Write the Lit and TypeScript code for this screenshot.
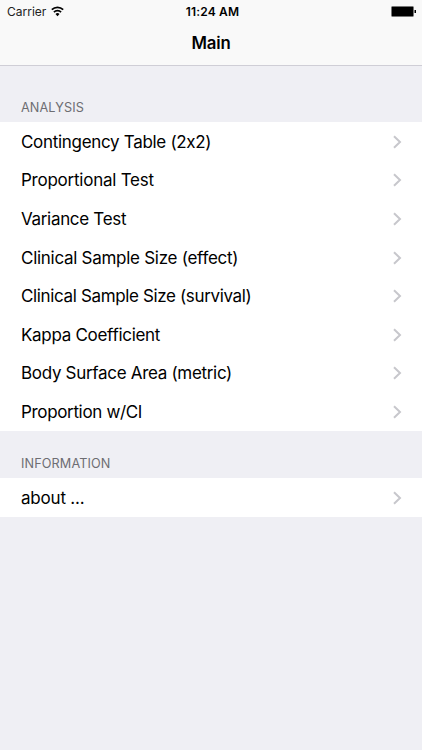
import { LitElement, html, css } from "lit";
import { customElement } from "lit/decorators.js";

interface Item { label: string; tracking: number }
interface Section { title: string; items: Item[] }

const SECTIONS: Section[] = [
  {
    title: "ANALYSIS",
    items: [
      { label: "Contingency Table (2x2)", tracking: -0.31 },
      { label: "Proportional Test", tracking: -0.24 },
      { label: "Variance Test", tracking: -0.32 },
      { label: "Clinical Sample Size (effect)", tracking: -0.28 },
      { label: "Clinical Sample Size (survival)", tracking: -0.36 },
      { label: "Kappa Coefficient", tracking: -0.3 },
      { label: "Body Surface Area (metric)", tracking: -0.31 },
      { label: "Proportion w/CI", tracking: -0.34 },
    ],
  },
  { title: "INFORMATION", items: [{ label: "about ...", tracking: -0.2 }] },
];

@customElement("app-root")
export class AppRoot extends LitElement {
  static styles = css`
    :host { display: flex; flex-direction: column; height: 750px; background: #efeff4; font-family: Inter, "Liberation Sans", sans-serif; color: #000; font-feature-settings: "calt" 0; white-space: nowrap; }
    .top { height: 65px; background: #f9f9f9; border-bottom: 1px solid #cfced6; flex: none; }
    .status { display: grid; grid-template-columns: 1fr auto 1fr; height: 22px; padding: 0 6px 0 7px; align-items: center; font-size: 12px; }
    .carrier { display: flex; align-items: center; gap: 5px; color: #222; }
    .time { font-weight: 600; padding-left: 2px; font-size: 12px; letter-spacing: 0.15px; }
    .battery { justify-self: end; }
    .title { height: 43px; line-height: 43px; text-align: center; font-size: 16.8px; font-weight: 600; letter-spacing: -0.2px; }
    svg { display: block; }
    .header { height: 29px; line-height: 30px; padding: 27px 0 0 21px; font-size: 12.7px; letter-spacing: 0.1px; color: #6d6d72; }
    .header.next { padding-top: 18px; }
    .row { display: flex; box-sizing: border-box; align-items: center; justify-content: space-between; height: 38.65px; padding: 0.6px 20px 0 21px; background: #fff; font-size: 17px; }
  `;

  render() {
    return html`
      <div class="top">
        <div class="status">
          <div class="carrier">
            <span>Carrier</span>
            <svg width="13" height="11" viewBox="0 0 13 11"><g fill="none" stroke="#000" stroke-width="1.7"><path d="M.8 3.6a8.200 8.200 0 0 1 11.400 0M2.900 6.100a5.100 5.100 0 0 1 7.200 0"/></g><path d="M4.500 7.900a2.800 2.800 0 0 1 4 0L6.500 10.200Z"/></svg>
          </div>
          <div class="time">11:24 AM</div>
          <svg class="battery" width="25" height="11" viewBox="0 0 25 11"><rect x=".5" y=".5" width="22" height="10" rx="1" stroke="#777"/><path d="M23.500 4h1.500v3h-1.500Z"/></svg>
        </div>
        <div class="title">Main</div>
      </div>
      ${SECTIONS.map((s, i) => html`
        <div class="header ${i ? "next" : ""}">${s.title}</div>
        ${s.items.map((it) => html`
          <div class="row">
            <span style="letter-spacing: ${it.tracking}px">${it.label}</span>
            <svg width="9" height="14" viewBox="0 0 9 14"><path d="M1 1.200 7 7 1 12.800" fill="none" stroke="#c7c7cc" stroke-width="2"/></svg>
          </div>`)}`)}
    `;
  }
}
